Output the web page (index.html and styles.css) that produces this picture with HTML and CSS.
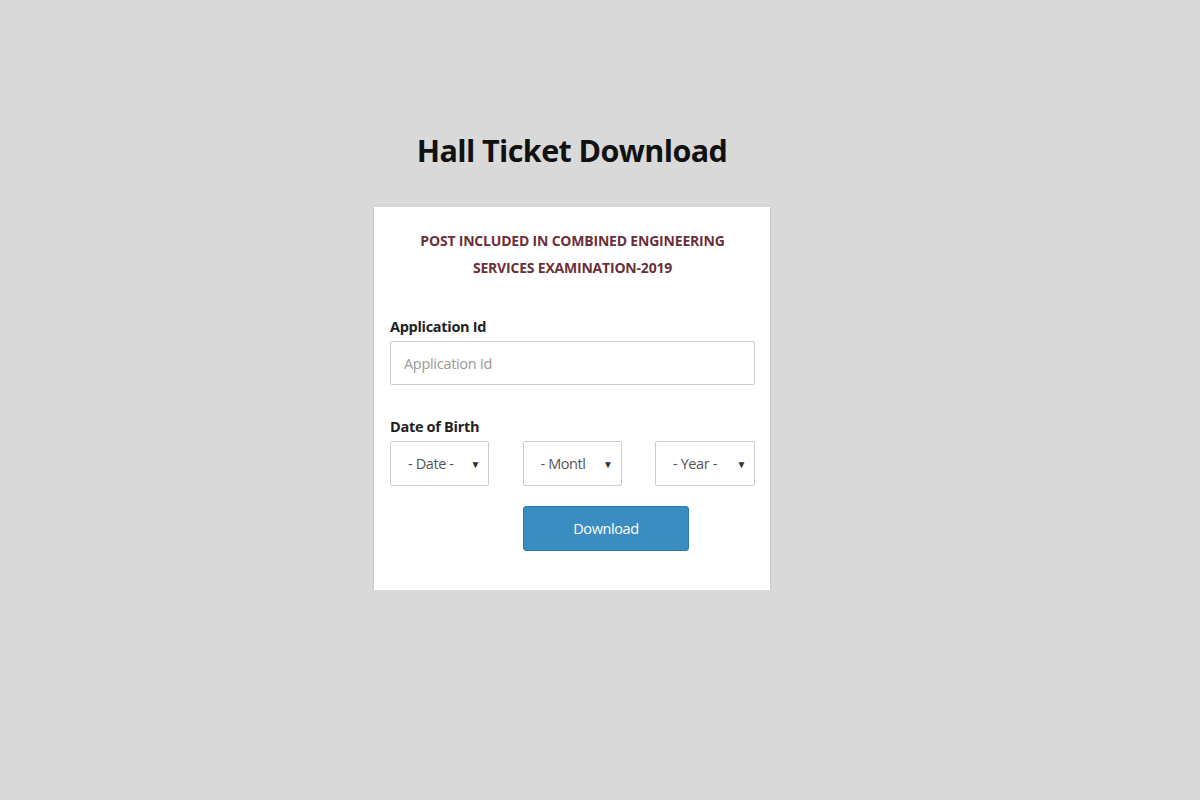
FILE: index.html
```html
<!DOCTYPE html>
<html>
<head>
<meta charset="utf-8">
<link rel="stylesheet" href="styles.css">
</head>
<body>
<main class="page">
  <h1 class="title">Hall Ticket Download</h1>
  <section class="card">
    <h2 class="card-head">POST INCLUDED IN COMBINED ENGINEERING<br>SERVICES EXAMINATION-2019</h2>
    <label class="label" for="appid">Application Id</label>
    <input class="input" id="appid" type="text" placeholder="Application Id">
    <div class="label dob">Date of Birth</div>
    <div class="dob-row">
      <div class="select"><span>- Date -</span><span class="caret">&#9660;</span></div>
      <div class="select"><span>- Montl</span><span class="caret">&#9660;</span></div>
      <div class="select"><span>- Year -</span><span class="caret">&#9660;</span></div>
    </div>
    <div class="btn-row">
      <button class="btn">Download</button>
    </div>
  </section>
</main>
</body>
</html>
```
FILE: styles.css
```css
html, body {
  margin: 0;
  padding: 0;
  background: #d9d9d9;
  font-family: "Open Sans", "Liberation Sans", sans-serif;
}
.page {
  display: flex;
  flex-direction: column;
  align-items: center;
  padding-top: 128px;
  padding-right: 56px;
}
.title {
  margin: 0;
  font-size: 30.5px;
  font-weight: 700;
  color: #111;
  letter-spacing: -0.6px;
  line-height: 44px;
}
.card {
  margin-top: 35px;
  width: 396px;
  box-sizing: border-box;
  background: #fff;
  padding: 20px 15px 39px 16px;
  box-shadow: 0 1px 2px rgba(0,0,0,0.18);
}
.card-head {
  margin: 0 0 36px;
  text-align: center;
  font-size: 14px;
  line-height: 27px;
  font-weight: 700;
  color: #6b3038;
  letter-spacing: -0.2px;
}
.label {
  display: block;
  font-size: 14.5px;
  font-weight: 700;
  color: #222;
  line-height: 20px;
  margin-bottom: 4px;
  letter-spacing: -0.3px;
}
.input {
  display: block;
  width: 100%;
  box-sizing: border-box;
  height: 44px;
  border: 1px solid #ccc;
  border-radius: 2px;
  padding: 0 13px;
  font-family: inherit;
  font-size: 14.5px;
  color: #555;
  outline: none;
  letter-spacing: -0.3px;
}
.input::placeholder { color: #999; }
.dob { margin-top: 32px; }
.dob-row {
  display: grid;
  grid-template-columns: 99px 99px 100px;
  justify-content: space-between;
}
.select {
  height: 45px;
  box-sizing: border-box;
  border: 1px solid #ccc;
  border-radius: 2px;
  display: flex;
  align-items: center;
  justify-content: space-between;
  padding: 0 8px 0 17px;
  font-size: 14.5px;
  color: #555;
  letter-spacing: -0.4px;
  overflow: hidden;
  white-space: nowrap;
}
.caret {
  font-size: 10px;
  color: #333;
}
.btn-row {
  display: grid;
  grid-template-columns: 99px 166px;
  column-gap: 34px;
  margin-top: 20px;
}
.btn {
  grid-column: 2;
  height: 45px;
  border: 1px solid #2f7bb0;
  border-radius: 3px;
  background: #3b8cc1;
  color: #fff;
  font-family: inherit;
  font-size: 14.5px;
  letter-spacing: -0.4px;
}
```
